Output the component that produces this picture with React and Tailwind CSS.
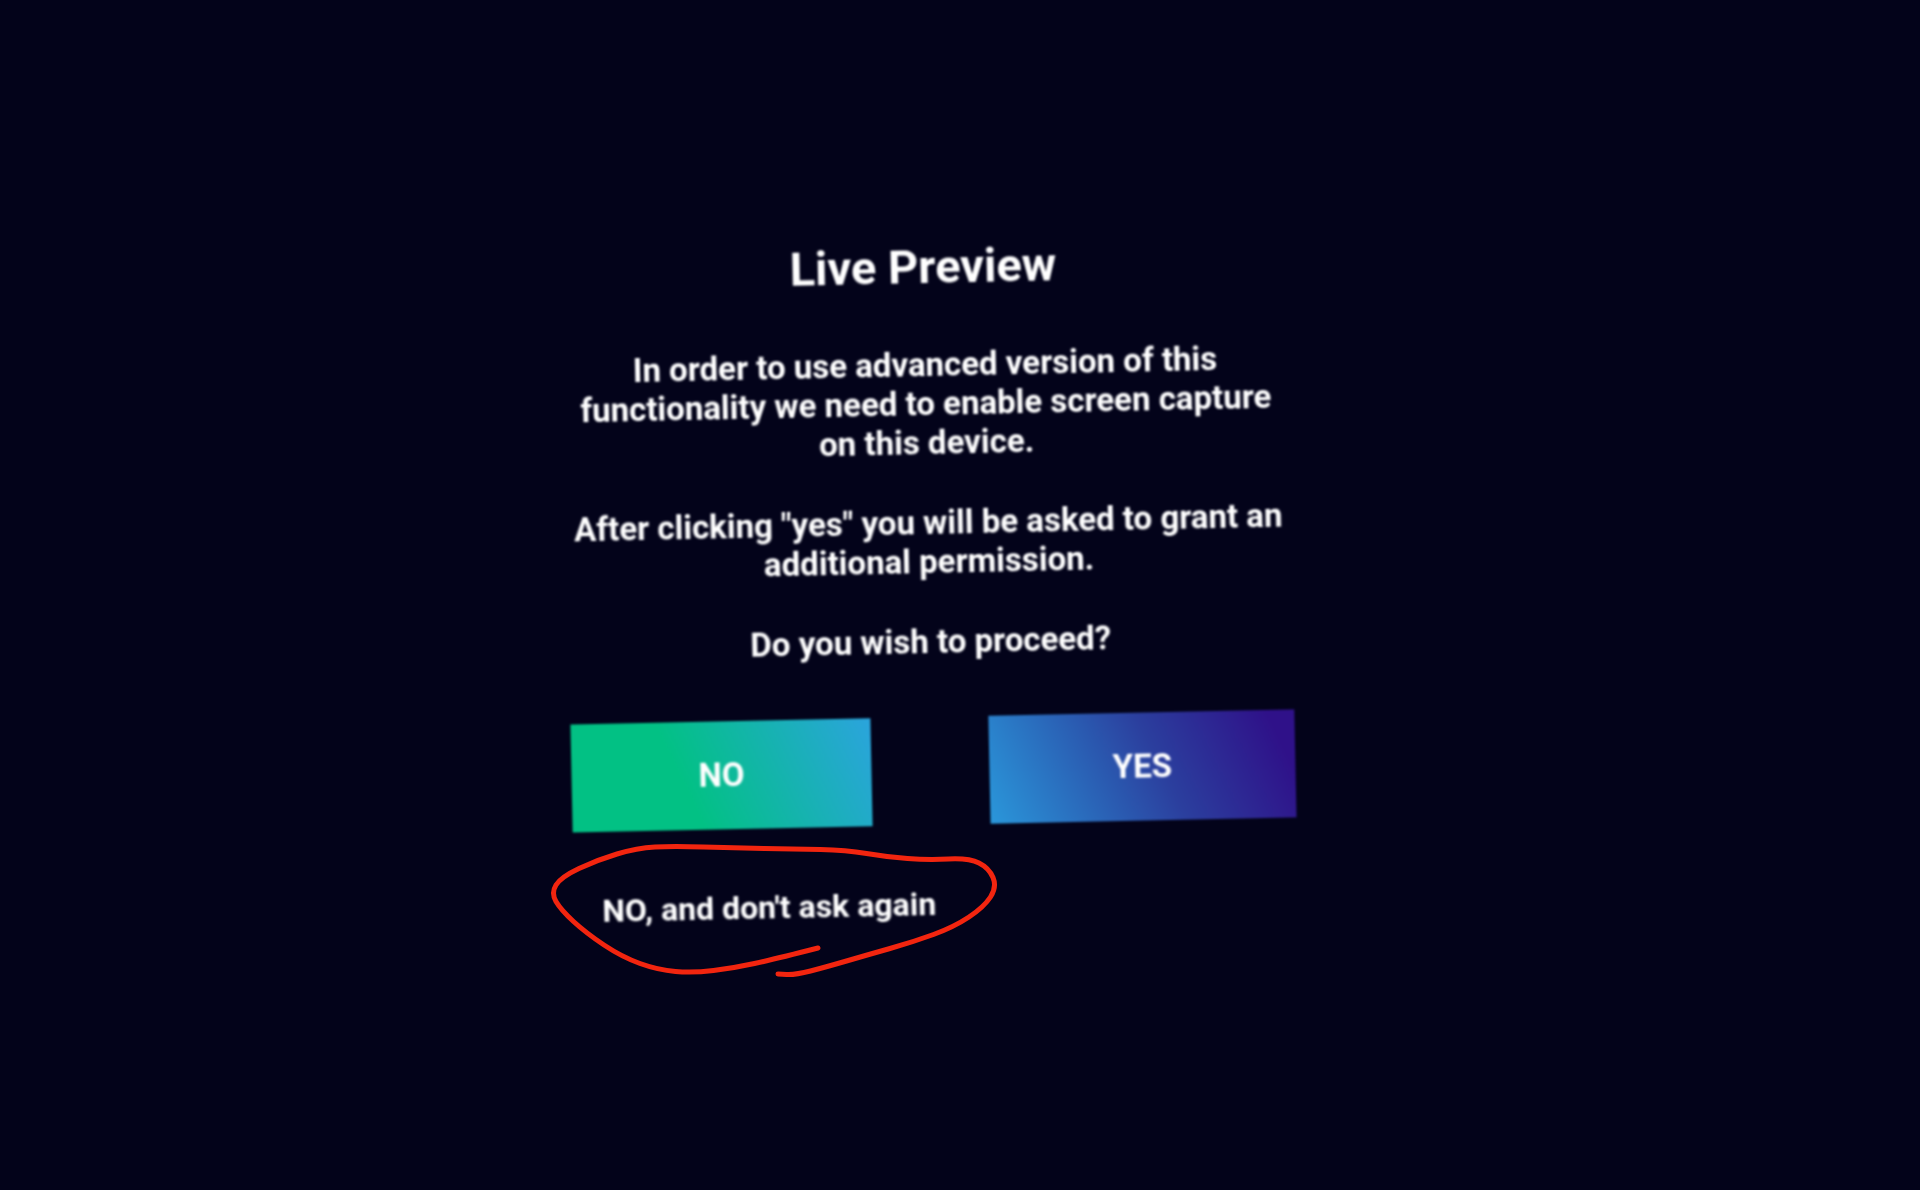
const circlePoints = [
  [818, 948], [775, 959], [734, 968], [693, 973], [658, 970], [622, 957], [586, 933], [561, 910],
  [551, 893], [561, 877], [597, 860], [637, 848], [673, 846], [734, 848], [795, 849], [846, 850],
  [887, 857], [928, 860], [969, 858], [989, 868], [997, 887], [984, 907], [954, 927], [913, 942],
  [867, 955], [826, 967], [795, 975], [778, 974],
];

// smooth pen stroke: quadratic curves through the midpoints
const buildStroke = (pts) => {
  let d = `M${pts[0][0]} ${pts[0][1]}`;
  for (let i = 1; i < pts.length - 1; i++) {
    const mx = (pts[i][0] + pts[i + 1][0]) / 2;
    const my = (pts[i][1] + pts[i + 1][1]) / 2;
    d += ` Q${pts[i][0]} ${pts[i][1]} ${mx} ${my}`;
  }
  const last = pts[pts.length - 1];
  return `${d} L${last[0]} ${last[1]}`;
};

const App = () => {
  return (
    <div className="relative w-full h-[1190px] overflow-hidden bg-[#03031a] font-['Roboto',sans-serif] text-white">
      <div className="ml-[565px] w-[724px] pt-[243px] rotate-[-1.2deg] blur-[1px] flex flex-col">
        {/* Dialog text */}
        <h1 className="text-center text-[47px] leading-[48px] font-bold">Live Preview</h1>
        <div className="mt-[54px] flex flex-col gap-[41px] text-center text-[33px] leading-[39px] font-bold">
          <p>
            In order to use advanced version of this
            <br />
            functionality we need to enable screen capture
            <br />
            on this device.
          </p>
          <p>
            After clicking "yes" you will be asked to grant an
            <br />
            additional permission.
          </p>
          <p>Do you wish to proceed?</p>
        </div>

        {/* Actions */}
        <div className="mt-[56px] flex justify-between">
          <button className="w-[300px] h-[108px] bg-[linear-gradient(65deg,#02c184_38%,#2ba4dd_100%)] text-[33px] font-bold">
            NO
          </button>
          <button className="w-[306px] h-[108px] bg-[linear-gradient(65deg,#2a97da_0%,#2b3f9e_55%,#2f1189_92%)] text-[33px] font-bold">
            YES
          </button>
        </div>
        <button className="mt-[59px] ml-[28px] self-start text-[32px] leading-[40px] font-bold">
          NO, and don't ask again
        </button>
      </div>

      {/* Red pen annotation */}
      <svg className="absolute inset-0" width="1920" height="1190" viewBox="0 0 1920 1190" fill="none">
        <path d={buildStroke(circlePoints)} stroke="#f2250f" strokeWidth="5" strokeLinecap="round" strokeLinejoin="round" />
      </svg>
    </div>
  );
};

export default App;
